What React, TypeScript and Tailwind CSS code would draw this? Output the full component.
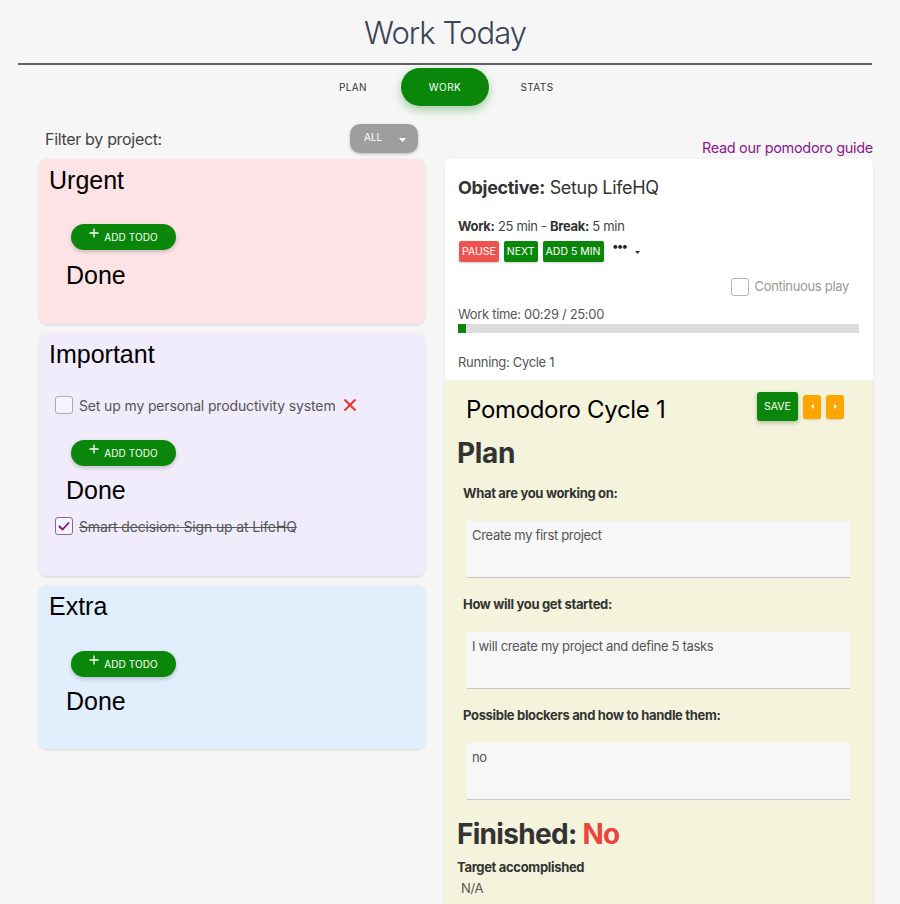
import React from "react";

const SANS = "font-['Inter','Liberation_Sans',sans-serif]";
const HELV = "font-['Liberation_Sans','Arial',sans-serif] tracking-normal";

function Plus() {
  return (
    <svg width="10" height="10" viewBox="0 0 10 10" className="-mt-[9px] mr-[5px]">
      <path d="M5 0.5v9M0.5 5h9" stroke="white" strokeWidth="1.3" />
    </svg>
  );
}

function AddTodo({ className = "" }: { className?: string }) {
  return (
    <button
      className={`ml-[22px] flex h-[26px] w-[105px] items-center justify-center rounded-full bg-[#0a870a] text-[10px] tracking-[0.1px] text-white shadow-[0_2px_4px_rgba(0,0,0,0.2)] ${className}`}
    >
      <Plus />
      <span className="mt-[1px]">ADD TODO</span>
    </button>
  );
}

function Box({ checked = false }: { checked?: boolean }) {
  return (
    <span
      className={`flex h-[18px] w-[18px] shrink-0 items-center justify-center rounded-[3px] border bg-white/40 ${
        checked ? "border-[#8a6a8a]" : "border-[#a9a9b3]"
      }`}
    >
      {checked && (
        <svg width="12" height="10" viewBox="0 0 12 10">
          <path d="M1 5l3.5 3.5L11 1.5" fill="none" stroke="#7b0a7b" strokeWidth="1.8" />
        </svg>
      )}
    </span>
  );
}

function Card({
  title,
  bg,
  children,
}: {
  title: string;
  bg: string;
  children: React.ReactNode;
}) {
  return (
    <div className={`rounded-lg ${bg} px-[10px] pt-[7px] shadow-[0_1px_3px_rgba(0,0,0,0.12)]`}>
      <div className={`${HELV} h-7 text-[25px] leading-7 text-black`}>{title}</div>
      {children}
    </div>
  );
}

function Done({ className = "" }: { className?: string }) {
  return <div className={`${HELV} ml-[17px] h-7 text-[25px] leading-7 text-black ${className}`}>Done</div>;
}

function Textbox({ text }: { text: string }) {
  return (
    <div className="ml-[22px] mt-[19px] h-[57px] w-[383px] border-b border-[#c8c8c8] bg-[#f7f7f7] px-[5px] pt-[5px] text-[13px] leading-[18px] text-[#555]">
      {text}
    </div>
  );
}

function Label({ children, className = "" }: { children: React.ReactNode; className?: string }) {
  return <div className={`text-[13px] font-bold leading-[18px] text-[#333] ${className}`}>{children}</div>;
}

export default function App() {
  return (
    <div className={`${SANS} min-h-[904px] w-[900px] overflow-hidden bg-[#f6f6f6] tracking-[-0.02em] text-[#333]`}>
      <div className="mx-[18px] w-[854px]">
        <h1 className="h-[63px] pt-[11px] text-center text-[31px] font-light leading-[44px] tracking-[-0.03em] text-[#3b4454]">
          Work Today
        </h1>
        <div className="h-[2px] bg-[#5d6165]" />
        <div className="mt-[3px] flex justify-center gap-[4px]">
          <div className="flex h-[38px] w-[88px] items-center justify-center text-[10px] tracking-[0.4px] text-[#333]">PLAN</div>
          <div className="flex h-[38px] w-[88px] items-center justify-center rounded-full bg-[#0a870a] text-[10px] tracking-[0.4px] text-white shadow-[0_4px_10px_rgba(10,135,10,0.35)]">
            WORK
          </div>
          <div className="flex h-[38px] w-[88px] items-center justify-center text-[10px] tracking-[0.4px] text-[#333]">STATS</div>
        </div>
      </div>

      <div className="mt-[12px] flex gap-[20px] pl-[39px]">
        {/* left column */}
        <div className="w-[386px]">
          <div className="flex h-[41px] items-center justify-between pl-[6px] pr-[7px]">
            <span className="text-[16px] text-[#444]">Filter by project:</span>
            <button className="flex h-[29px] w-[68px] items-center rounded-[10px] bg-[#9e9e9e] pl-[14px] text-[10px] tracking-normal text-white shadow-[0_1px_3px_rgba(0,0,0,0.25)]">
              <span className="-mt-[3px]">ALL</span>
              <svg width="7" height="4" viewBox="0 0 7 4" className="ml-[17px] mt-[3px]">
                <path d="M0 0h7L3.5 4z" fill="white" />
              </svg>
            </button>
          </div>

          <div className="flex flex-col gap-[9px]">
            <Card title="Urgent" bg="bg-[#fde3e5]">
              <AddTodo className="mt-[30px]" />
              <Done className="mt-[11px]" />
              <div className="h-[35px]" />
            </Card>

            <Card title="Important" bg="bg-[#f0ecfc]">
              <div className="ml-[6px] mt-[25px] flex h-6 items-center gap-[6px] text-[14px] tracking-[-0.01em] text-[#555]">
                <Box />
                <span>Set up my personal productivity system</span>
                <svg width="14" height="14" viewBox="0 0 14 14" className="ml-[1px]">
                  <path d="M1.5 1.5l11 11M12.5 1.5l-11 11" stroke="#e8352b" strokeWidth="2" />
                </svg>
              </div>
              <AddTodo className="mt-[23px]" />
              <Done className="mt-[10px]" />
              <div className="ml-[6px] mt-[10px] flex h-6 items-center gap-[6px] text-[14px] tracking-[-0.01em] text-[#555]">
                <Box checked />
                <span className="line-through">Smart decision: Sign up at LifeHQ</span>
              </div>
              <div className="h-[38px]" />
            </Card>

            <Card title="Extra" bg="bg-[#e1eefc]">
              <AddTodo className="mt-[31px]" />
              <Done className="mt-[10px]" />
              <div className="h-[34px]" />
            </Card>
          </div>
        </div>

        {/* right column */}
        <div className="w-[428px]">
          <div className="flex h-[41px] items-end justify-end pb-[1px]">
            <a className="text-[14.5px] leading-[20px] text-[#8a1a8a]">Read our pomodoro guide</a>
          </div>

          <div className="rounded-t-md bg-white pl-[13px] pr-[14px] pt-[17px] pb-[9px] shadow-[0_1px_3px_rgba(0,0,0,0.08)]">
            <div className="text-[18px] leading-6 text-[#333]">
              <b className="font-bold">Objective:</b> Setup LifeHQ
            </div>
            <div className="mt-[17px] text-[13px] leading-[18px] text-[#444]">
              <b className="font-bold text-[#333]">Work:</b> 25 min - <b className="font-bold text-[#333]">Break:</b> 5 min
            </div>
            <div className="mt-[6px] flex h-[21px] items-stretch gap-[5px] pl-[1px] text-[10.5px] tracking-normal text-white">
              <span className="flex items-center rounded-[2px] bg-[#ef5350] px-[3px] shadow-[0_1px_2px_rgba(0,0,0,0.2)]">PAUSE</span>
              <span className="flex items-center rounded-[2px] bg-[#0a870a] px-[3px] shadow-[0_1px_2px_rgba(0,0,0,0.2)]">NEXT</span>
              <span className="flex items-center rounded-[2px] bg-[#0a870a] px-[3px] shadow-[0_1px_2px_rgba(0,0,0,0.2)]">ADD 5 MIN</span>
              <span className="relative ml-[1px] w-[32px] bg-white shadow-[0_0_2px_rgba(0,0,0,0.05)]">
                <span className="absolute left-[3px] top-0 text-[12px] font-bold leading-[10px] tracking-[-1px] text-[#222]">•••</span>
                <svg width="5" height="3" viewBox="0 0 5 3" className="absolute left-[25px] top-[10px]">
                  <path d="M0 0h5L2.5 3z" fill="#333" />
                </svg>
              </span>
            </div>
            <div className="mt-[14px] flex h-[22px] items-center justify-end gap-[6px] pr-[10px] text-[13px] text-[#9a9a9a]">
              <span className="h-[18px] w-[18px] rounded-[3px] border border-[#b5b5b5]" />
              <span>Continuous play</span>
            </div>
            <div className="mt-[7px] text-[13px] leading-[18px] text-[#555]">Work time: 00:29 / 25:00</div>
            <div className="mt-[1px] h-[9px] w-[401px] bg-[#dcdcdc]">
              <div className="h-full bg-[#0a870a]" style={{ width: `${Math.max((29 / 1500) * 401, 8)}px` }} />
            </div>
            <div className="mt-[20px] text-[13px] leading-[18px] text-[#555]">Running: Cycle 1</div>
          </div>

          <div className="min-h-[540px] bg-[#f4f4dc] shadow-[0_1px_3px_rgba(0,0,0,0.12)]">
            <div className="flex items-start justify-between pl-[21px] pr-[29px] pt-[12px]">
              <div className="mt-[3px] text-[24px] leading-[30px] text-black">Pomodoro Cycle 1</div>
              <div className="flex h-[29px] items-center gap-[5px]">
                <span className="flex h-[29px] w-[41px] items-center justify-center rounded-[3px] bg-[#0a870a] text-[10.5px] tracking-normal text-white shadow-[0_2px_4px_rgba(0,0,0,0.25)]">
                  SAVE
                </span>
                <span className="flex h-[24px] w-[18px] items-center justify-center rounded-[3px] bg-[#ffa500] shadow-[0_1px_2px_rgba(0,0,0,0.15)]">
                  <svg width="3" height="5" viewBox="0 0 3 5"><path d="M3 0v5L0 2.5z" fill="white" /></svg>
                </span>
                <span className="flex h-[24px] w-[18px] items-center justify-center rounded-[3px] bg-[#ffa500] shadow-[0_1px_2px_rgba(0,0,0,0.15)]">
                  <svg width="3" height="5" viewBox="0 0 3 5"><path d="M0 0v5L3 2.5z" fill="white" /></svg>
                </span>
              </div>
            </div>
            <div className="ml-[12px] mt-[11px] text-[28px] font-bold leading-[34px] text-[#333]">Plan</div>
            <Label className="ml-[18px] mt-[14px]">What are you working on:</Label>
            <Textbox text="Create my first project" />
            <Label className="ml-[18px] mt-[17px]">How will you get started:</Label>
            <Textbox text="I will create my project and define 5 tasks" />
            <Label className="ml-[18px] mt-[17px]">Possible blockers and how to handle them:</Label>
            <Textbox text="no" />
            <div className="ml-[12px] mt-[17px] text-[28px] font-bold leading-[34px] tracking-[-0.025em] text-[#333]">
              Finished: <span className="text-[#e8453c]">No</span>
            </div>
            <Label className="ml-[12px] mt-[7px]">Target accomplished</Label>
            <div className="ml-[16px] mt-[3px] text-[13px] leading-[18px] text-[#555]">N/A</div>
            <div className="h-[20px]" />
          </div>
        </div>
      </div>
    </div>
  );
}
